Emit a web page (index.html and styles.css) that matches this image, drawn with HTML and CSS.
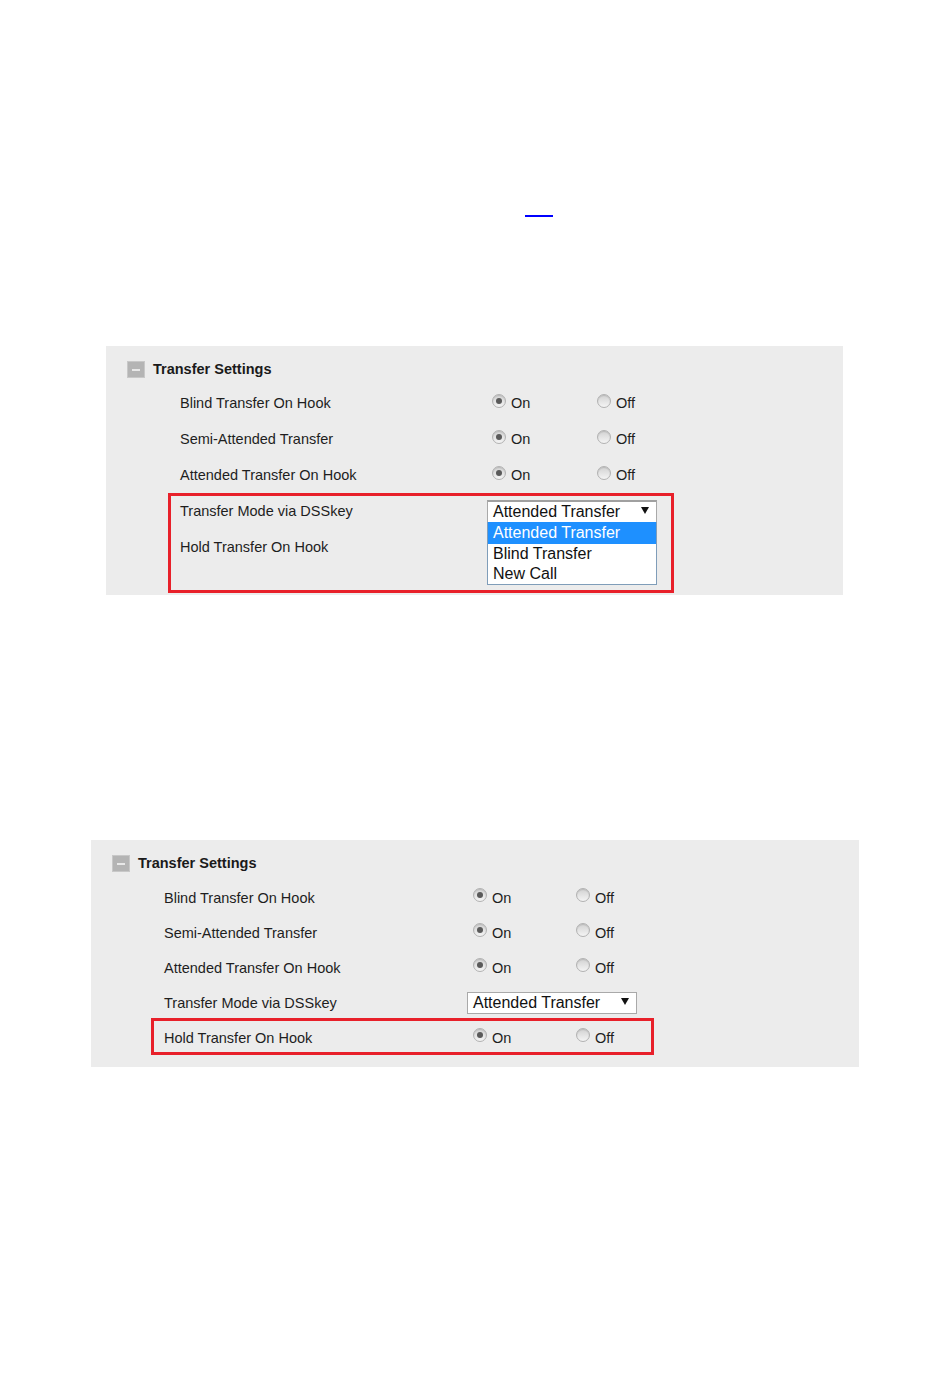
FILE: index.html
```html
<!DOCTYPE html>
<html lang="en">
<head>
    <meta charset="UTF-8">
    <title>Transfer Settings</title>
    <link rel="stylesheet" href="styles.css">
</head>
<body>
    <div class="top-ref">
        <a class="ref-link" href="#">&nbsp;</a>
    </div>

    <!-- Figure 1: dropdown opened -->
    <section class="panel panel-one">
        <div class="panel-head">
            <span class="collapse-icon"></span>
            <span class="panel-title">Transfer Settings</span>
        </div>
        <div class="rows">
            <div class="row">
                <span class="label">Blind Transfer On Hook</span>
                <label class="radio"><span class="dot checked"></span>On</label>
                <label class="radio"><span class="dot"></span>Off</label>
            </div>
            <div class="row">
                <span class="label">Semi-Attended Transfer</span>
                <label class="radio"><span class="dot checked"></span>On</label>
                <label class="radio"><span class="dot"></span>Off</label>
            </div>
            <div class="row">
                <span class="label">Attended Transfer On Hook</span>
                <label class="radio"><span class="dot checked"></span>On</label>
                <label class="radio"><span class="dot"></span>Off</label>
            </div>
            <div class="row">
                <span class="label">Transfer Mode via DSSkey</span>
                <div class="select open">
                    <span class="select-value">Attended Transfer</span>
                    <svg class="caret" width="8" height="7" viewBox="0 0 8 7"><path d="M0 0H8L4 7Z" fill="#111"/></svg>
                    <ul class="options">
                        <li class="active">Attended Transfer</li>
                        <li>Blind Transfer</li>
                        <li>New Call</li>
                    </ul>
                </div>
            </div>
            <div class="row">
                <span class="label">Hold Transfer On Hook</span>
            </div>
        </div>
        <div class="mark mark-one"></div>
    </section>

    <!-- Figure 2: hold transfer -->
    <section class="panel panel-two">
        <div class="panel-head">
            <span class="collapse-icon"></span>
            <span class="panel-title">Transfer Settings</span>
        </div>
        <div class="rows">
            <div class="row">
                <span class="label">Blind Transfer On Hook</span>
                <label class="radio"><span class="dot checked"></span>On</label>
                <label class="radio"><span class="dot"></span>Off</label>
            </div>
            <div class="row">
                <span class="label">Semi-Attended Transfer</span>
                <label class="radio"><span class="dot checked"></span>On</label>
                <label class="radio"><span class="dot"></span>Off</label>
            </div>
            <div class="row">
                <span class="label">Attended Transfer On Hook</span>
                <label class="radio"><span class="dot checked"></span>On</label>
                <label class="radio"><span class="dot"></span>Off</label>
            </div>
            <div class="row">
                <span class="label">Transfer Mode via DSSkey</span>
                <div class="select">
                    <span class="select-value">Attended Transfer</span>
                    <svg class="caret" width="8" height="7" viewBox="0 0 8 7"><path d="M0 0H8L4 7Z" fill="#111"/></svg>
                </div>
            </div>
            <div class="row">
                <span class="label">Hold Transfer On Hook</span>
                <label class="radio"><span class="dot checked"></span>On</label>
                <label class="radio"><span class="dot"></span>Off</label>
            </div>
        </div>
        <div class="mark mark-two"></div>
    </section>
</body>
</html>
```

FILE: styles.css
```css
body {
    margin: 0;
    background: #ffffff;
    font-family: 'Liberation Sans', Arial, sans-serif;
    color: #1e1e1e;
}

/* Enlace vacio de la parte superior */
.top-ref {
    padding-top: 201px;
}

.ref-link {
    display: block;
    width: 28px;
    height: 14px;
    margin-left: 525px;
    border-bottom: 2px solid #0000ff;
    text-decoration: none;
}

/* Paneles */
.panel {
    position: relative;
    box-sizing: border-box;
    background-color: #ececec;
    padding-top: 12px;
}

.panel-one {
    margin: 129px 0 0 106px;
    width: 737px;
    height: 249px;
    --label-w: 312px;
    --on-w: 105px;
    --row-h: 36px;
    --pad-left: 74px;
    --rows-top: 5px;
    --select-shift: -5px;
}

.panel-two {
    margin: 245px 0 0 91px;
    width: 768px;
    height: 227px;
    --label-w: 309px;
    --on-w: 103px;
    --row-h: 35px;
    --pad-left: 73px;
    --rows-top: 6px;
    --select-shift: -6px;
}

.panel-head {
    display: flex;
    align-items: center;
    gap: 8px;
    height: 22px;
    padding-left: 21px;
}

.collapse-icon {
    position: relative;
    box-sizing: border-box;
    width: 18px;
    height: 17px;
    background-color: #b4b4b4;
    border: 1px solid #c8c8c8;
}

.collapse-icon::after {
    content: "";
    position: absolute;
    left: 4px;
    top: 7px;
    width: 8px;
    height: 2px;
    background-color: #e8e8e8;
}

.panel-title {
    font-size: 14.5px;
    font-weight: bold;
    color: #1a1a1a;
}

.rows {
    margin-top: var(--rows-top);
    padding-left: var(--pad-left);
}

.row {
    display: grid;
    grid-template-columns: var(--label-w) var(--on-w) auto;
    align-items: center;
    height: var(--row-h);
    font-size: 14.5px;
}

.label {
    color: #1e1e1e;
}

/* Radios */
.radio {
    display: inline-flex;
    align-items: center;
    gap: 5px;
    color: #1e1e1e;
}

.dot {
    position: relative;
    box-sizing: border-box;
    width: 14px;
    height: 14px;
    margin-top: -5px;
    border-radius: 50%;
    border: 1px solid #b2b2b2;
    background: linear-gradient(180deg, #d2d2d2, #f4f4f4);
    box-shadow: inset 0 1px 1px rgba(0, 0, 0, 0.12);
}

.dot.checked::after {
    content: "";
    position: absolute;
    left: 3px;
    top: 3px;
    width: 6px;
    height: 6px;
    border-radius: 50%;
    background-color: #5a5a5a;
}

/* Select */
.select {
    position: relative;
    box-sizing: border-box;
    grid-column: 2 / 4;
    width: 170px;
    height: 22px;
    margin-left: var(--select-shift);
    padding-left: 5px;
    display: flex;
    align-items: center;
    background-color: #ffffff;
    border: 1px solid #a9a9a9;
    font-size: 16px;
    color: #111;
}

.select.open {
    height: 23px;
    border-top: 2px solid #a0a0a0;
}

.select-value {
    flex: 1;
}

.caret {
    margin-right: 7px;
    margin-top: -3px;
}

.options {
    position: absolute;
    top: 100%;
    left: -1px;
    width: 170px;
    box-sizing: border-box;
    margin: 0;
    padding: 0;
    list-style: none;
    background-color: #ffffff;
    border: 1px solid #7f9db9;
    border-top: none;
}

.options li {
    height: 20px;
    line-height: 20px;
    padding-left: 5px;
}

.options li.active {
    height: 22px;
    line-height: 22px;
    background-color: #1e90ff;
    color: #ffffff;
}

/* Recuadros rojos de anotacion */
.mark {
    position: absolute;
    box-sizing: border-box;
    border: 3px solid #e8202a;
}

.mark-one {
    left: 62px;
    top: 147px;
    width: 506px;
    height: 100px;
}

.mark-two {
    left: 60px;
    top: 178px;
    width: 503px;
    height: 37px;
}
```
